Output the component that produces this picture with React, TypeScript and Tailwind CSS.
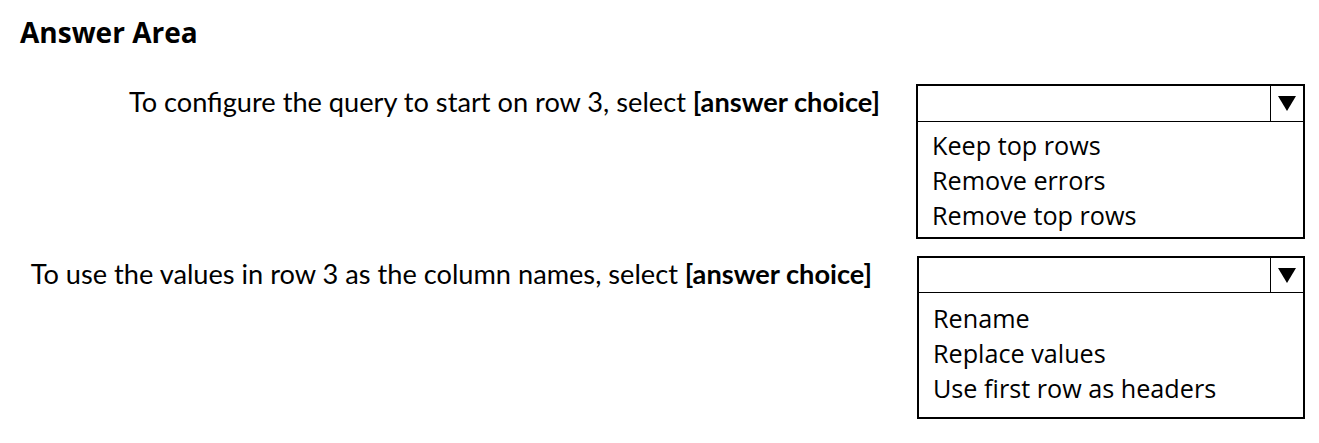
const Triangle = () => (
  <svg width="18" height="15" viewBox="0 0 18 15" className="block">
    <polygon points="0,0 18,0 9,15" fill="#000" />
  </svg>
);

type BoxProps = {
  options: string[];
  headerH: string;
  bodyPad: string;
  offset: string;
  width: string;
};

const AnswerBox = ({ options, headerH, bodyPad, offset, width }: BoxProps) => (
  <div className={`${offset} ${width} border-2 border-black bg-white`}>
    <div className={`flex ${headerH} border-b border-black`}>
      <div className="flex-1" />
      <div className="w-[33px] border-l border-black flex items-center justify-center">
        <Triangle />
      </div>
    </div>
    <div className={`${bodyPad} px-[14px] font-['Open_Sans',sans-serif] text-[25.2px] leading-[35px] text-black`}>
      {options.map((o) => (
        <div key={o}>{o}</div>
      ))}
    </div>
  </div>
);

const App = () => {
  return (
    <div className="w-[1319px] h-[443px] bg-white text-black overflow-hidden">
      <h1 className="pl-5 pt-[13px] font-['Open_Sans',sans-serif] font-bold text-[28px] leading-[38px]">
        Answer Area
      </h1>

      <div className="mt-[33px] flex items-start">
        <div className="w-[880px] h-[37px] flex items-center justify-end font-['Lato',sans-serif] text-[27.2px]">
          <span>
            To configure the query to start on row 3, select{" "}
            <span className="font-bold">[answer choice]</span>
          </span>
        </div>
        <AnswerBox
          offset="ml-[36px]"
          width="w-[389px]"
          headerH="h-[36px]"
          bodyPad="pt-[6px] pb-[4px]"
          options={["Keep top rows", "Remove errors", "Remove top rows"]}
        />
      </div>

      <div className="mt-[17px] flex items-start">
        <div className="w-[872px] h-[36px] flex items-center justify-end font-['Lato',sans-serif] text-[27.2px]">
          <span>
            To use the values in row 3 as the column names, select{" "}
            <span className="font-bold">[answer choice]</span>
          </span>
        </div>
        <AnswerBox
          offset="ml-[45px]"
          width="w-[388px]"
          headerH="h-[35px]"
          bodyPad="pt-[8px] pb-[11px]"
          options={["Rename", "Replace values", "Use first row as headers"]}
        />
      </div>
    </div>
  );
};

export default App;
